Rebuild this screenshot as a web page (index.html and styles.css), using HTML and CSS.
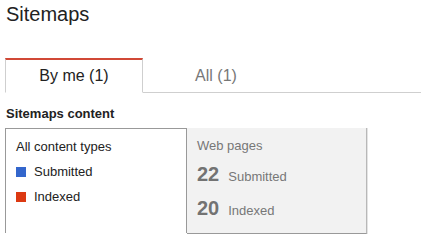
FILE: index.html
```html
<!DOCTYPE html>
<html>
<head>
<meta charset="utf-8">
<link rel="stylesheet" href="styles.css">
</head>
<body>
<h1 class="title">Sitemaps</h1>
<div class="tabs">
  <div class="tab active">By me (1)</div>
  <div class="tab">All (1)</div>
  <div class="tab-fill"></div>
</div>
<h2 class="section">Sitemaps content</h2>
<div class="panels">
  <div class="legend">
    <div class="row">All content types</div>
    <div class="row"><span class="swatch blue"></span>Submitted</div>
    <div class="row"><span class="swatch red"></span>Indexed</div>
  </div>
  <div class="stats">
    <div class="stat-label">Web pages</div>
    <div class="stat"><span class="num">22</span>Submitted</div>
    <div class="stat"><span class="num">20</span>Indexed</div>
  </div>
</div>
</body>
</html>
```
FILE: styles.css
```css
html, body {
  margin: 0;
  padding: 0;
  background: #fff;
  font-family: "Liberation Sans", Arial, sans-serif;
}
.title {
  margin: 0;
  padding-left: 6px;
  font-size: 20px;
  font-weight: normal;
  line-height: 28px;
  color: #222;
}
.tabs {
  display: flex;
  margin-top: 30px;
  padding-left: 5px;
}
.tab {
  box-sizing: border-box;
  width: 146px;
  height: 35px;
  border-top: 2px solid transparent;
  border-bottom: 1px solid #cfcfcf;
  text-align: center;
  font-size: 16px;
  line-height: 31px;
  color: #777;
}
.tab.active {
  width: 138px;
  border-top-color: #d14836;
  border-left: 1px solid #cfcfcf;
  border-right: 1px solid #cfcfcf;
  border-bottom-color: #fff;
  color: #222;
}
.tab-fill {
  flex: 1;
  border-bottom: 1px solid #cfcfcf;
}
.section {
  margin: 13px 0 0;
  padding-left: 6px;
  font-size: 13px;
  font-weight: bold;
  line-height: 16px;
  color: #222;
}
.panels {
  display: flex;
  margin-top: 6px;
  padding-left: 5px;
}
.legend {
  box-sizing: border-box;
  width: 182px;
  height: 105px;
  border: 1px solid #999;
  border-bottom: none;
  padding: 8px 0 0 10px;
  display: flex;
  flex-direction: column;
  gap: 5px;
  font-size: 13px;
  color: #222;
}
.row {
  display: flex;
  align-items: center;
  line-height: 20px;
}
.swatch {
  width: 10px;
  height: 10px;
  margin-right: 8px;
}
.swatch.blue { background: #3366cc; }
.swatch.red { background: #dc3912; }
.stats {
  box-sizing: border-box;
  width: 180px;
  height: 106px;
  background: #f2f2f2;
  border-bottom: 1px solid #999;
  border-right: 1px solid #b8b8b8;
  box-shadow: 1px 0 0 #e4e4e4;
  padding: 8px 0 0 10px;
  display: flex;
  flex-direction: column;
  gap: 5px;
  font-size: 13px;
  color: #777;
}
.stat-label {
  line-height: 20px;
}
.stat {
  line-height: 26px;
}
.num {
  font-size: 20px;
  font-weight: bold;
  color: #737373;
  margin-right: 9px;
}
```
